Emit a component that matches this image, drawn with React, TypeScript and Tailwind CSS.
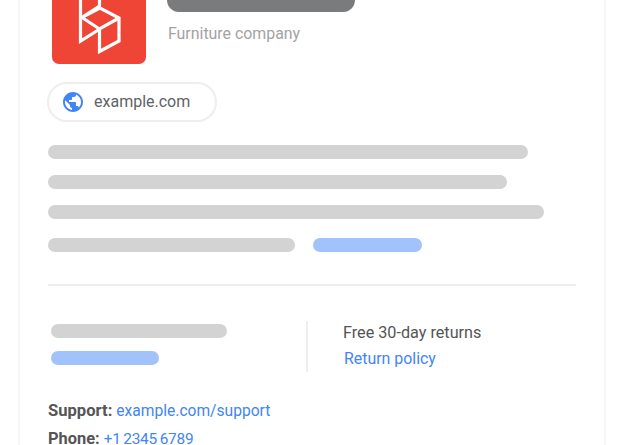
const FONT = "font-['Roboto','Liberation_Sans',sans-serif]"

function Bar({ className }: { className: string }) {
  return <div className={`h-[14px] rounded-full ${className}`} />
}

function Logo() {
  return (
    <div className="flex h-[94px] w-[94px] shrink-0 items-center justify-center rounded-b-[7px] bg-[#ee4537]">
      <svg width="94" height="94" viewBox="0 0 94 94" fill="none" stroke="#ffffff" strokeWidth="3.2">
        <path d="M28.5 0V71L47 59.5M47.5 0V36L30.5 47L48 38L67 48V71L47.5 81.5V59" />
        <path d="M30 47.5L47.5 59L67 48" />
      </svg>
    </div>
  )
}

function GlobeIcon() {
  return (
    <svg width="24" height="24" viewBox="0 0 24 24" fill="#4285f4" className="shrink-0">
      <path d="M12 2C6.48 2 2 6.48 2 12s4.48 10 10 10 10-4.48 10-10S17.52 2 12 2zm-1 17.93c-3.95-.49-7-3.85-7-7.93 0-.62.08-1.21.21-1.79L9 15v1c0 1.1.9 2 2 2v1.93zm6.9-2.54c-.26-.81-1-1.39-1.9-1.39h-1v-3c0-.55-.45-1-1-1H8v-2h2c.55 0 1-.45 1-1V7h2c1.1 0 2-.9 2-2v-.41c2.93 1.19 5 4.06 5 7.41 0 2.08-.8 3.97-2.1 5.39z" />
    </svg>
  )
}

export default function App() {
  return (
    <div className={`h-[445px] w-[625px] overflow-hidden bg-white ${FONT}`}>
      <div className="ml-[18px] mt-[-30px] h-[520px] w-[588px] border-x-2 border-[#f7f7f7] pl-[28px] pr-[28px]">
        {/* Header */}
        <div className="ml-[4px] flex gap-[21px]">
          <Logo />
          <div>
            <div className="mt-[16px] h-[26px] w-[188px] rounded-b-[12px] bg-[#7a7b7c]" />
            <p className="ml-[1px] mt-[11px] text-[15.9px] leading-[22px] text-[#a3a3a3]">Furniture company</p>
          </div>
        </div>

        {/* Site chip */}
        <div className="-ml-[1px] mt-[18px] flex h-[40px] w-[170px] items-center gap-[9px] rounded-full border-2 border-[#eeeeee] pl-[12px]">
          <GlobeIcon />
          <span className="text-[16px] text-[#5f6368]">example.com</span>
        </div>

        {/* Description placeholder */}
        <div className="mt-[23px] flex flex-col gap-[16px]">
          <Bar className="w-[480px] bg-[#d2d3d2]" />
          <Bar className="w-[459px] bg-[#d2d3d2]" />
          <Bar className="w-[496px] bg-[#d2d3d2]" />
        </div>
        <div className="mt-[19px] flex gap-[18px]">
          <Bar className="w-[247px] bg-[#d2d3d2]" />
          <Bar className="w-[109px] bg-[#a1c2fa]" />
        </div>

        <div className="mt-[32px] h-[2px] w-[528px] bg-[#eeeeee]" />

        {/* Returns */}
        <div className="mt-[35px] flex">
          <div className="w-[258px] pl-[3px] pt-[3px]">
            <Bar className="w-[176px] bg-[#d2d3d2]" />
            <Bar className="mt-[13px] w-[108px] bg-[#a1c2fa]" />
          </div>
          <div className="h-[51px] w-[2px] bg-[#eeeeee]" />
          <div className="pl-[35px]">
            <p className="text-[16.2px] leading-[24px] text-[#555555]">Free 30-day returns</p>
            <a className="ml-[1px] mt-[2px] block text-[15.9px] leading-[24px] text-[#4285f4]">Return policy</a>
          </div>
        </div>

        {/* Contact */}
        <p className="mt-[27px] text-[16px] leading-[24px] text-[#555555]">
          <span className="text-[16.6px] font-bold">Support:</span>{" "}
          <a className="text-[15.6px] text-[#4285f4]">example.com/support</a>
        </p>
        <p className="mt-[4px] text-[16px] leading-[24px] text-[#555555]">
          <span className="text-[16.4px] font-bold">Phone:</span>{" "}
          <a className="text-[15.4px] tracking-[-0.2px] text-[#4285f4] [word-spacing:-1px]">+1 2345 6789</a>
        </p>
      </div>
    </div>
  )
}
